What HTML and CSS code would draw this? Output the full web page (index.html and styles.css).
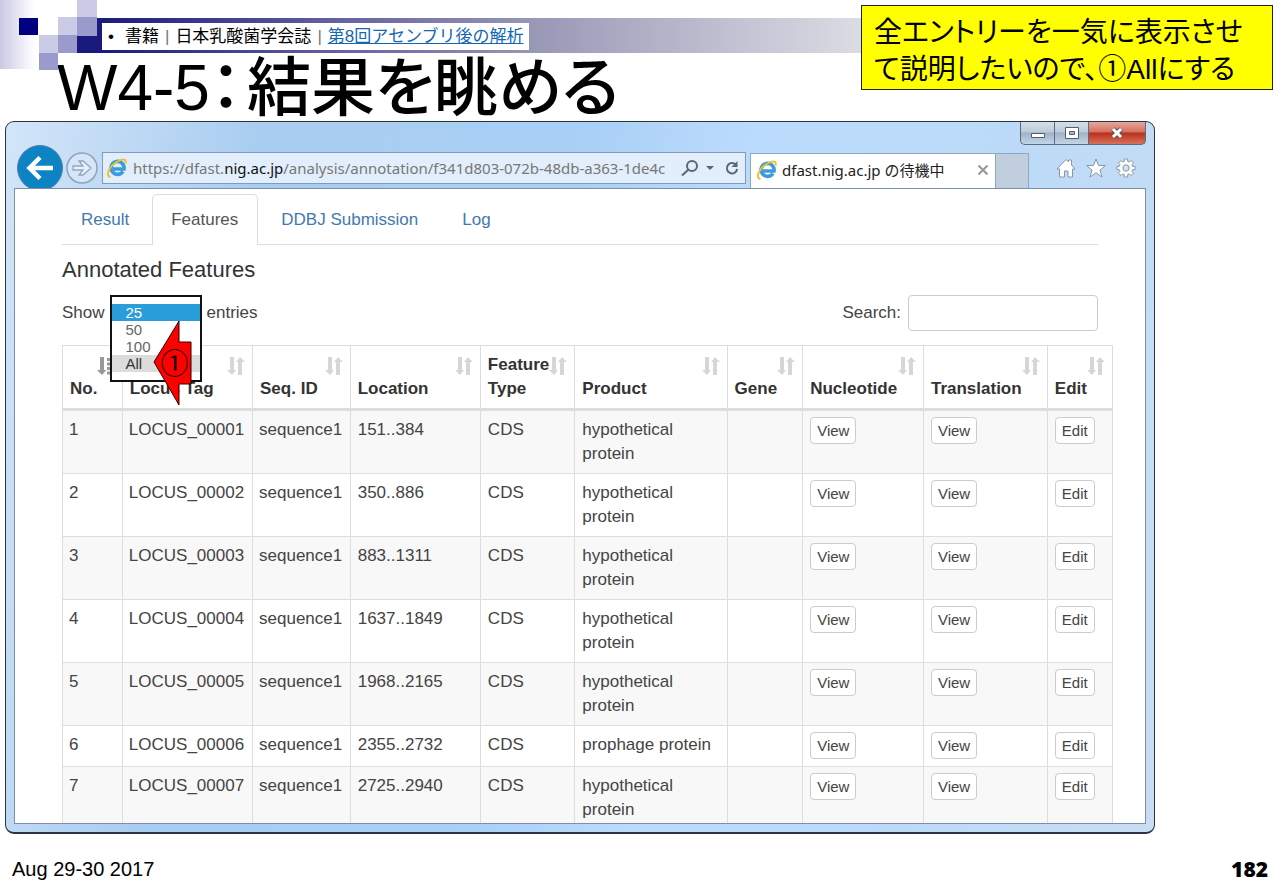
FILE: index.html
```html
<!DOCTYPE html>
<html lang="ja">
<head>
<meta charset="utf-8">
<title>W4-5：結果を眺める</title>
<link rel="stylesheet" href="styles.css">
</head>
<body>
<svg width="0" height="0" class="defs" aria-hidden="true">
  <symbol id="sort" viewBox="0 0 18 18"><path d="M3 0h4v13h2l-4 5-5-5h3zM11 18V5H9l4-5 5 5h-3v13z"/></symbol>
  <symbol id="sortdown" viewBox="0 0 18 18"><path d="M3 0h4v13h2.500L5 18 0 13h3zM10 1h3v3h-3zM10 5.500h4.500v3H10zM10 10h6v3h-6zM10 14.500h8v3h-8z"/></symbol>
  <symbol id="ie" viewBox="0 0 20 20">
    <path d="M16 13.500A6.500 6.500 0 1 1 17 11H6" fill="none" stroke="#3b9bdc" stroke-width="3.600"/>
    <path d="M3.500 19C-2 18.500 2 8.500 9.500 4c5.500-3.300 10.500-3.600 9 1.500" fill="none" stroke="#edc12c" stroke-width="2"/>
  </symbol>
</svg>
<main class="slide">
  <header class="head">
    <svg class="tiles" width="102" height="70" viewBox="0 0 102 70" aria-hidden="true">
      <defs><linearGradient id="fade"><stop offset="0" stop-color="#c9c9e6"/><stop offset="1" stop-color="#fff"/></linearGradient></defs>
      <path fill="url(#fade)" d="M0 0h34v69H0z"/>
      <path fill="#000080" d="M19 18h19v17H19z"/>
      <path fill="#cbcbe6" d="M77 0h20v17H77zM58 17h19v18H58zM39 35h19v18H39z"/>
      <path fill="#9a9acd" d="M77 17h20v19H77zM58 35h19v18H58zM39 53h19v17H39z"/>
      <path fill="#1a1a7c" d="M77 36h25v17H77z"/>
    </svg>
    <div class="bar">
      <nav class="crumb"><span>•</span><span>書籍</span><i>|</i><span>日本乳酸菌学会誌</span><i>|</i><a href="#">第8回アセンブリ後の解析</a></nav>
    </div>
    <h1 class="title"><span>W4-5：</span><span>結果を眺める</span></h1>
    <p class="note">全エントリーを一気に表示させ<br>て説明したいので、①Allにする</p>
  </header>

  <section class="window">
    <div class="winbar">
      <button class="wb" aria-label="最小化"><svg width="16" height="14" viewBox="0 0 16 14"><path d="M1.500 7.500h13v4h-13z" fill="#fff" stroke="#555e70"/></svg></button>
      <button class="wb" aria-label="最大化"><svg width="16" height="14" viewBox="0 0 16 14"><path d="M1.500 1.500h13v11h-13zM5.500 5.500h5v3h-5z" fill="#fff" fill-rule="evenodd" stroke="#555e70"/></svg></button>
      <button class="wb close" aria-label="閉じる"><svg width="14" height="14" viewBox="0 0 14 14"><path d="M3 3l8 8M11 3l-8 8" stroke="#5a5560" stroke-width="5"/><path d="M3 3l8 8M11 3l-8 8" stroke="#fff" stroke-width="3"/></svg></button>
    </div>
    <div class="navbar">
      <button class="back" aria-label="戻る"><svg width="46" height="43" viewBox="0 0 46 43"><circle cx="23" cy="23" r="22.500" fill="#0d83c4" stroke="#4b7fa6"/><path d="M36 23H13M23 12.500L12.500 23 23 33.500" fill="none" stroke="#fff" stroke-width="4.500"/></svg></button>
      <button class="fwd" aria-label="進む"><svg width="32" height="32" viewBox="0 0 32 32"><circle cx="16" cy="16" r="15" fill="#d6e6f8" stroke="#8fa3bd" stroke-width="1.500"/><path d="M7 14h10l-4-5h4l8 7-8 7h-4l4-5H7z" fill="#e8f1fb" stroke="#93a5bc" stroke-width="1.300"/></svg></button>
      <div class="address">
        <svg width="20" height="20"><use href="#ie"/></svg>
        <div class="url" role="textbox" aria-label="URL">https://dfast.<b>nig.ac.jp</b>/analysis/annotation/f341d803-072b-48db-a363-1de4c</div>
        <button aria-label="検索"><svg width="18" height="18" viewBox="0 0 18 18" fill="none" stroke="#5c6677" stroke-width="2"><circle cx="11" cy="7" r="5"/><path d="M7.500 10.500L1 16.500"/></svg></button>
        <button aria-label="履歴"><svg width="10" height="6" viewBox="0 0 10 6"><path d="M1 1h8L5 5z" fill="#5c6677"/></svg></button>
        <button aria-label="更新"><svg width="16" height="16" viewBox="0 0 16 16"><path d="M12.500 5.500A5.200 5.200 0 1 0 13.200 9" fill="none" stroke="#5c6677" stroke-width="2"/><path d="M13.500 1v6h-6z" fill="#5c6677"/></svg></button>
      </div>
      <div class="btab">
        <svg width="20" height="20"><use href="#ie"/></svg>
        <span>dfast.nig.ac.jp の待機中</span>
        <button aria-label="タブを閉じる"><svg width="12" height="12" viewBox="0 0 12 12"><path d="M1.500 1.500l9 9M10.500 1.500l-9 9" stroke="#9a9a9a" stroke-width="2.200"/></svg></button>
      </div>
      <button class="newtab" aria-label="新しいタブ"></button>
      <div class="tools">
        <button aria-label="ホーム"><svg width="20" height="20" viewBox="0 0 20 20"><path d="M1 11l9-9.500 2.500 2.500V2h3v5L19 11h-2.500v8H12v-6H8.500v6h-5v-8z" fill="#fff" stroke="#8b96a5"/></svg></button>
        <button aria-label="お気に入り"><svg width="20" height="20" viewBox="0 0 20 20"><path d="M10 1l2.500 6.500H19.300L14 12l2 7-6-4.200L4 19l2-7L.700 7.500H7.500z" fill="#fff" stroke="#8b96a5"/></svg></button>
        <button aria-label="ツール"><svg width="20" height="20" viewBox="0 0 20 20"><path d="M8.300 1h3.400v2.400l1.600.7 1.700-1.700 2.600 2.600-1.700 1.700.7 1.600H19v3.400h-2.400l-.7 1.600 1.700 1.700-2.600 2.600-1.700-1.700-1.600.7V19H8.300v-2.400l-1.600-.7L5 17.600 2.400 15l1.700-1.700-.7-1.600H1V8.300h2.400l.7-1.600L2.400 5 5 2.400l1.700 1.700 1.600-.7z" fill="#fff" stroke="#8b96a5"/><circle cx="10" cy="10" r="3.200" fill="#cfe1f5" stroke="#8b96a5"/></svg></button>
      </div>
    </div>

    <div class="page">
      <nav class="tabs">
        <a href="#">Result</a><a href="#" class="on">Features</a><a href="#">DDBJ Submission</a><a href="#">Log</a>
      </nav>
      <h2>Annotated Features</h2>
      <div class="controls">
        <label for="len">Show</label>
        <div class="picker">
          <select id="len" size="4">
            <option class="cur">25</option><option>50</option><option>100</option><option class="hover">All</option>
          </select>
          <div class="arrow">
            <svg width="40" height="88" viewBox="0 0 40 88" aria-hidden="true"><path d="M1 43L26 2v21h12v42H26v21z" fill="#f00" stroke="#300"/></svg>
            <span>①</span>
          </div>
        </div>
        <span>entries</span>
        <label class="search" for="q">Search:</label>
        <input id="q" type="search">
      </div>
      <table>
        <colgroup><col class="c1"><col class="c2"><col class="c3"><col class="c4"><col class="c5"><col class="c6"><col class="c7"><col class="c8"><col class="c9"><col class="c10"></colgroup>
        <thead><tr>
          <th class="sorted">No.<svg><use href="#sortdown"/></svg></th>
          <th>Locus Tag<svg><use href="#sort"/></svg></th>
          <th>Seq. ID<svg><use href="#sort"/></svg></th>
          <th>Location<svg><use href="#sort"/></svg></th>
          <th>Feature<br>Type<svg><use href="#sort"/></svg></th>
          <th>Product<svg><use href="#sort"/></svg></th>
          <th>Gene<svg><use href="#sort"/></svg></th>
          <th>Nucleotide<svg><use href="#sort"/></svg></th>
          <th>Translation<svg><use href="#sort"/></svg></th>
          <th>Edit<svg><use href="#sort"/></svg></th>
        </tr></thead>
        <tbody>
          <tr><td>1</td><td>LOCUS_00001</td><td>sequence1</td><td>151..384</td><td>CDS</td><td>hypothetical protein</td><td></td><td class="act"><button>View</button></td><td class="act"><button>View</button></td><td class="act"><button>Edit</button></td></tr>
          <tr><td>2</td><td>LOCUS_00002</td><td>sequence1</td><td>350..886</td><td>CDS</td><td>hypothetical protein</td><td></td><td class="act"><button>View</button></td><td class="act"><button>View</button></td><td class="act"><button>Edit</button></td></tr>
          <tr><td>3</td><td>LOCUS_00003</td><td>sequence1</td><td>883..1311</td><td>CDS</td><td>hypothetical protein</td><td></td><td class="act"><button>View</button></td><td class="act"><button>View</button></td><td class="act"><button>Edit</button></td></tr>
          <tr><td>4</td><td>LOCUS_00004</td><td>sequence1</td><td>1637..1849</td><td>CDS</td><td>hypothetical protein</td><td></td><td class="act"><button>View</button></td><td class="act"><button>View</button></td><td class="act"><button>Edit</button></td></tr>
          <tr><td>5</td><td>LOCUS_00005</td><td>sequence1</td><td>1968..2165</td><td>CDS</td><td>hypothetical protein</td><td></td><td class="act"><button>View</button></td><td class="act"><button>View</button></td><td class="act"><button>Edit</button></td></tr>
          <tr><td>6</td><td>LOCUS_00006</td><td>sequence1</td><td>2355..2732</td><td>CDS</td><td>prophage protein</td><td></td><td class="act"><button>View</button></td><td class="act"><button>View</button></td><td class="act"><button>Edit</button></td></tr>
          <tr><td>7</td><td>LOCUS_00007</td><td>sequence1</td><td>2725..2940</td><td>CDS</td><td>hypothetical protein</td><td></td><td class="act"><button>View</button></td><td class="act"><button>View</button></td><td class="act"><button>Edit</button></td></tr>
        </tbody>
      </table>
    </div>
  </section>

  <footer class="foot"><span>Aug 29-30 2017</span><b>182</b></footer>
</main>
</body>
</html>
```
FILE: styles.css
```css
* { box-sizing: border-box; }
body { margin: 0; background: #fff; color: #000; font-family: "Liberation Sans", "Noto Sans CJK JP", sans-serif; }
button { margin: 0; padding: 0; border: 0; background: none; font: inherit; color: inherit; }
svg { display: block; }
.defs { position: absolute; }
.slide { position: relative; display: flex; flex-direction: column; height: 100vh; }

.head { flex: none; height: 121px; padding-top: 18px; }
.tiles { position: absolute; left: 0; top: 0; }
.bar { height: 35px; margin: 0 7px 0 97px; padding: 5px; display: flex; align-items: flex-start; background: linear-gradient(90deg, #1a1a7c, #6b66a3 22%, #9a9ab8 38%, #dcdce4 65%, #fff); }
.crumb { display: flex; align-items: center; gap: 6px; height: 27px; padding: 0 6px; background: #fff; font-size: 17px; line-height: 24px; white-space: nowrap; }
.crumb span:first-child { margin-right: 5px; }
.crumb i { font-style: normal; color: #777; }
.crumb a { color: #1467b3; }
.title { display: flex; gap: 5px; margin: 0 0 0 57px; font-family: "Liberation Sans", "Noto Sans CJK JP", sans-serif; font-weight: 500; font-size: 64px; line-height: 70px; font-feature-settings: "palt"; white-space: nowrap; }
.note { position: absolute; top: 5px; right: 7px; width: 412px; margin: 0; padding: 8px 12px 1px; border: 1px solid #222; background: #ff0; font-size: 28px; line-height: 37px; font-feature-settings: "palt"; white-space: nowrap; }

.window { flex: 1; min-height: 0; display: flex; flex-direction: column; margin: 0 125px 0 5px; padding: 0 8px 8px; border: 1px solid #2b3440; border-bottom-width: 2px; border-radius: 9px; background: linear-gradient(100deg, #d3e5f9, #a9cdf0 20%, #a9cff5 45%, #bcdcfd 60%, #bcdaf8 80%, #c9def4); }
.winbar { display: flex; justify-content: flex-end; height: 23px; flex: none; }
.wb { width: 34px; display: flex; align-items: center; justify-content: center; border: 1px solid #5d6a7c; border-top: 0; border-right: 0; background: linear-gradient(#d5dfea, #bccada 45%, #9fb2c7 50%, #c3d6e8); }
.wb:first-child { border-radius: 0 0 0 5px; }
.close { width: 58px; border-right: 1px solid #5d6a7c; border-radius: 0 0 5px 0; background: linear-gradient(#e5a79c, #d57161 45%, #b8301b 50%, #d9705b); }
.navbar { display: flex; align-items: flex-end; height: 43px; flex: none; padding-left: 3px; }
.fwd { margin: 0 4px 4px 3px; }
.address { flex: 1; min-width: 0; height: 32px; margin-bottom: 4px; padding: 0 5px 0 4px; display: flex; align-items: center; gap: 6px; border: 1px solid #7f9bbd; background: #e2eefb; }
.url { flex: 1; overflow: hidden; white-space: nowrap; font-family: "Noto Sans", sans-serif; font-size: 15px; color: #777; }
.url b { font-weight: 400; color: #111; }
.address button:last-child { margin-left: 3px; }
.btab { width: 246px; height: 35px; margin-left: 4px; padding: 0 6px 3px; display: flex; align-items: center; gap: 5px; border: 1px solid #8fa6c1; border-bottom: 0; background: #fff; font-family: "Noto Sans", "Noto Sans CJK JP", sans-serif; font-size: 15px; line-height: 24px; color: #222; white-space: nowrap; }
.btab button { margin-left: auto; }
.newtab { width: 33px; height: 35px; border: 1px solid #93a8c0; border-width: 1px 1px 0 0; background: #c1cedd; }
.tools { display: flex; gap: 10px; width: 117px; height: 35px; padding: 0 10px 6px 0; justify-content: flex-end; align-items: center; }

.page { flex: 1; min-height: 0; overflow: hidden; padding: 5px 32px 0 47px; border: 1px solid #7c90aa; background: #fff; color: #444; font-size: 17px; line-height: 24px; }
.tabs { display: flex; height: 51px; margin-right: 15px; border-bottom: 1px solid #ddd; }
.tabs a { height: 51px; padding: 14px 20px 0 19px; color: #4379b0; text-decoration: none; }
.tabs .on { padding: 13px 19px 0 18px; margin: 0 4px 0 3px; border: 1px solid #ddd; border-bottom: 0; border-radius: 5px 5px 0 0; background: #fff; color: #555; }
.tabs a:last-child { padding-left: 24px; }
h2 { margin: 12px 0; font-size: 22px; line-height: 26px; font-weight: 400; color: #333; }
.controls { display: flex; align-items: center; gap: 5px; height: 36px; margin-right: 15px; }
.picker { position: relative; width: 92px; height: 36px; z-index: 2; }
select { position: absolute; left: 0; top: 0; width: 92px; height: 87px; padding: 7px 0; margin: 0; border: 2px solid #111; border-radius: 0; background: #fff; font: 15px/17px "Liberation Sans", sans-serif; color: #666; overflow: hidden; outline: 0; }
option { min-height: 17px; height: 17px; padding: 0 0 0 14px; line-height: 17px; }
.cur { background: #2a9ddb; color: #fff; }
.hover { background: #dcdcdc; color: #333; }
.arrow { position: absolute; left: 43px; top: 24px; width: 40px; height: 88px; }
.arrow span { position: absolute; left: 8px; top: 23px; font-family: "Noto Sans CJK JP", sans-serif; font-size: 28px; line-height: 40px; color: #000; }
.search { margin: 0 2px 0 auto; }
#q { width: 190px; height: 36px; padding: 0 8px; border: 1px solid #ccc; border-radius: 4px; background: #fff; font: inherit; }

table { width: 100%; margin-top: 14px; border-collapse: collapse; table-layout: fixed; }
.c1 { width: 5.7%; } .c2 { width: 12.4%; } .c3 { width: 9.3%; } .c4 { width: 12.4%; } .c5 { width: 9%; }
.c6 { width: 14.5%; } .c7 { width: 7.2%; } .c8 { width: 11.5%; } .c9 { width: 11.8%; } .c10 { width: 6.2%; }
th, td { border: 1px solid #ddd; padding: 7px 0 7px 7px; text-align: left; vertical-align: top; }
td:nth-child(-n+3) { padding-left: 6px; }
th { position: relative; vertical-align: bottom; border-bottom: 3px solid #ddd; color: #333; white-space: nowrap; }
th svg { position: absolute; right: 7px; top: 11px; width: 18px; height: 18px; fill: #d6d6d6; }
th.sorted svg { fill: #999; }
tbody tr:nth-child(odd) { background: #f8f8f8; }
td.act { padding-top: 6px; }
td button { display: block; height: 27px; padding: 0 6px; border: 1px solid #ccc; border-radius: 4px; background: #fff; font-size: 15px; line-height: 24px; }

.foot { flex: none; height: 52px; padding: 18px 12px 0; display: flex; justify-content: space-between; align-items: center; font-size: 20px; line-height: 24px; }
.foot b { font-family: "Open Sans", sans-serif; font-weight: 800; font-size: 21px; }
```
